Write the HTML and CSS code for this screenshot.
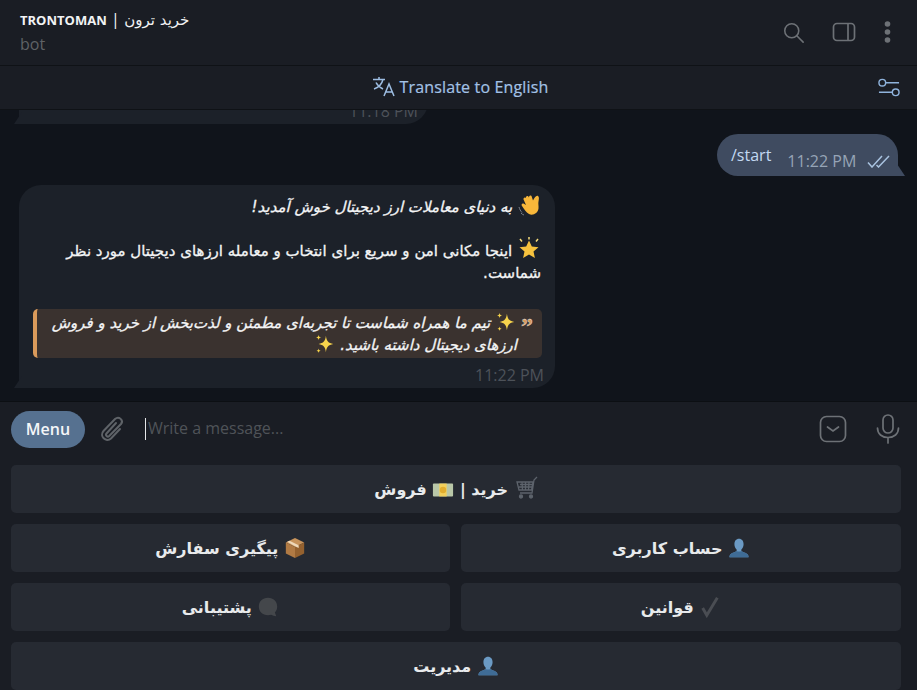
FILE: index.html
```html
<!DOCTYPE html>
<html lang="en">
<head>
  <meta charset="UTF-8">
  <meta name="viewport" content="width=device-width, initial-scale=1.0">
  <title>TRONTOMAN bot</title>
  <link rel="stylesheet" href="styles.css">
</head>
<body>
  <svg class="defs" width="0" height="0">
    <symbol id="person" viewBox="0 0 24 24">
      <path fill="#6b9ac4" d="M12 2c3.2 0 5 2.6 5 5.8 0 2.4-1 4.6-2.4 5.7v1.7c0 .8 5.400 2 6.900 3.800.9 1.100.9 3 .9 3H1.600s0-1.900.9-3c1.500-1.800 6.900-3 6.900-3.800v-1.700C8 12.400 7 10.200 7 7.800 7 4.600 8.800 2 12 2z"/>
      <path fill="#3f6c96" d="M1.600 22s0-1.900.9-3c1.500-1.800 6.900-3 6.900-3.800 1.500 1 3.700 1 5.200 0 0 .8 5.400 2 6.900 3.800.9 1.100.9 3 .9 3z"/>
    </symbol>
    <symbol id="sparkle" viewBox="0 0 24 24">
      <path fill="#f7d44c" d="M13 3c.8 6 2.500 8 8 9-5.500 1-7.200 3-8 9-.8-6-2.500-8-8-9 5.500-1 7.200-3 8-9z"/>
      <path fill="#f7d44c" d="M5 2c.3 2 .9 2.700 3 3-2.100.3-2.700 1-3 3-.3-2-.9-2.700-3-3 2.100-.3 2.700-1 3-3zM5 17c.3 1.600.7 2.100 2.400 2.400-1.700.3-2.100.8-2.400 2.400-.3-1.600-.7-2.100-2.400-2.400 1.700-.3 2.100-.8 2.400-2.400z"/>
    </symbol>
  </svg>

  <div class="app">
    <header class="topbar">
      <div class="peer">
        <div class="peer-name"><b>TRONTOMAN</b> <span class="peer-sep">|</span> <span class="peer-fa" dir="rtl">خرید ترون</span></div>
        <div class="peer-status">bot</div>
      </div>
      <div class="top-icons">
        <svg width="21" height="21" viewBox="0 0 24 24" fill="none" stroke="#6d7176" stroke-width="1.800"><circle cx="10" cy="10" r="8"/><path d="M15.500 15.500l7.500 7.500" stroke-linecap="round"/></svg>
        <svg width="24" height="22" viewBox="0 0 24 22" fill="none" stroke="#6d7176" stroke-width="1.700"><rect x="1.500" y="2.500" width="21" height="17" rx="3.500"/><path d="M16 2.500v17"/></svg>
        <svg width="7" height="22" viewBox="0 0 7 22" fill="#6d7176"><circle cx="3.500" cy="3" r="2.800"/><circle cx="3.500" cy="11" r="2.800"/><circle cx="3.500" cy="19" r="2.800"/></svg>
      </div>
    </header>

    <div class="translate-bar">
      <div class="translate-link">
        <svg width="23" height="21" viewBox="0 0 23 21" fill="none" stroke="#9dbde2" stroke-width="1.500"><path d="M0 3.500h12M6 1v2.500M10 3.500c-1 4-4.500 8-9 9.500M3 6.500c1.500 3 4 5 7 6.500"/><path d="M11 20l5-12 5 12M12.800 16h6.500"/></svg>
        <span>Translate to English</span>
      </div>
      <svg class="tune" width="22" height="20" viewBox="0 0 23 20" fill="none" stroke="#8fb3dc" stroke-width="1.500"><circle cx="4.500" cy="4.500" r="3.500"/><path d="M8 4.500h14M1 14.500h14"/><circle cx="18.500" cy="14.500" r="3.500"/></svg>
    </div>

    <main class="messages">
      <div class="bubble old-bubble">
        <span class="time">11:18 PM</span>
      </div>

      <div class="bubble out-bubble">
        <span class="out-text">/start</span>
        <span class="time">11:22 PM</span>
        <svg width="23" height="13" viewBox="0 0 23 13" fill="none" stroke="#a9c3e0" stroke-width="1.500"><path d="M1 7.500l4 4.500L15 1M9.500 10l2 2L22 1"/></svg>
      </div>

      <div class="bubble in-bubble">
        <div class="msg-text" dir="rtl">
          <p class="slanted"><svg class="emoji" width="24" height="24" viewBox="0 0 24 24"><path fill="#f8b73a" d="M21 3c-2-1-3.500 2-5 4.500L14.500 3C13 2 12 3 12 4.500L11 3C9.500 2.500 8.500 4 9 5L8 4.500C6.500 4.500 6 6 7 7.500L9 12 6.500 10.500C5 10 4 11.500 5 13c2 3 4 6.500 7 8 4 2 9-1 9.500-5.500.3-3-.5-5 0-7 .3-2 1-4.500-.5-5.500z"/><path fill="none" stroke="#7a7f8a" stroke-width="1" d="M2 14c.5 2 1.500 4 3 5.500M4 20c.8 1 1.800 1.700 3 2"/></svg> به دنیای معاملات ارز دیجیتال خوش آمدید!</p>
          <p class="gap-line"><svg class="emoji" width="24" height="24" viewBox="0 0 24 24"><path fill="#f6c23e" d="M12 3.500l2.800 5.900 6.700.8-5 4.400 1.400 6.400L12 17.600l-5.900 3.400 1.400-6.400-5-4.400 6.700-.8z"/><path stroke="#f6dc7a" stroke-width="1.500" d="M12 0v2.500M3 2l2 2.500M21 2l-2 2.500"/></svg> اینجا مکانی امن و سریع برای انتخاب و معامله ارزهای دیجیتال مورد نظر<br>شماست.</p>
        </div>
        <blockquote class="quote" dir="rtl">
          <span class="quote-mark">”</span>
          <p class="slanted"><svg class="emoji" width="22" height="22"><use href="#sparkle"/></svg> تیم ما همراه شماست تا تجربه‌ای مطمئن و لذت‌بخش از خرید و فروش<br>ارزهای دیجیتال داشته باشید. <svg class="emoji" width="22" height="22"><use href="#sparkle"/></svg></p>
        </blockquote>
        <div class="in-time"><span class="time">11:22 PM</span></div>
      </div>
    </main>

    <div class="composer">
      <button class="menu-btn">Menu</button>
      <svg class="clip" width="26" height="28" viewBox="0 0 26 28" fill="none" stroke="#5f6368" stroke-width="2" stroke-linecap="round"><path d="M17 8L7.500 18.500c-1.500 1.800.9 4.100 2.700 2.500L22 9c3-3.500-2-8.500-6-5L4.500 16c-4.500 5 2.500 12 7.500 7.500L21 14"/></svg>
      <div class="input"><span class="caret"></span><span class="placeholder">Write a message...</span></div>
      <svg width="28" height="28" viewBox="0 0 28 28" fill="none" stroke="#6d7176" stroke-width="1.700"><rect x="1.500" y="1.500" width="25" height="25" rx="6"/><path d="M8.500 12l5.500 4 5.500-4" stroke-linecap="round"/></svg>
      <svg class="mic" width="24" height="30" viewBox="0 0 24 30" fill="none" stroke="#6d7176" stroke-width="1.700"><rect x="7" y="1" width="10" height="18" rx="5"/><path d="M1.500 14c0 6 4.500 9.500 10.500 9.500S22.500 20 22.500 14M12 23.500V29" stroke-linecap="round"/></svg>
    </div>

    <div class="keyboard">
      <button class="key wide" dir="rtl"><svg class="emoji" width="24" height="24" viewBox="0 0 24 24" fill="none" stroke="#5d636c" stroke-width="1.300"><path d="M23 1l-3 3-2 13H6M3 6h16l-1.500 8H5z"/><path d="M6 8.500h12M5 11h13M8 6l.5 8M11.500 6v8M15 6l-.5 8"/><circle cx="7" cy="20.500" r="1.500" fill="#5d636c"/><circle cx="17" cy="20.500" r="1.500" fill="#5d636c"/></svg> خرید | <svg class="emoji" width="22" height="20" viewBox="0 0 24 20"><rect x="1" y="3" width="22" height="14" rx="1" fill="#b9c7a8"/><rect x="8" y="3" width="8" height="14" fill="#f2cf5b"/><circle cx="12" cy="10" r="3.500" fill="#e2ad2e"/></svg> فروش</button>
      <button class="key" dir="rtl"><svg class="emoji" width="22" height="22" viewBox="0 0 24 24"><path fill="#c8945c" d="M12 1l10 5-10 5L2 6z"/><path fill="#b07a44" d="M2 6l10 5v12L2 18z"/><path fill="#94612f" d="M22 6l-10 5v12l10-5z"/><path fill="#efd9ba" d="M6 4l10 5v3l-3-1.500L3.500 5.300z"/></svg> پیگیری سفارش</button>
      <button class="key" dir="rtl"><svg class="emoji" width="22" height="22"><use href="#person"/></svg> حساب کاربری</button>
      <button class="key" dir="rtl"><svg class="emoji" width="22" height="22" viewBox="0 0 24 24"><path fill="#44474b" d="M12 2c6 0 10 4 10 9.500 0 3-1 5-2.500 6.500l1.500 4c-2 0-4-.5-5.500-1.500-1 .3-2.300.5-3.500.5-6 0-10-4-10-9.500S6 2 12 2z"/></svg> پشتیبانی</button>
      <button class="key" dir="rtl"><svg class="emoji" width="22" height="22" viewBox="0 0 24 24" fill="none" stroke="#4a4d53" stroke-width="3.200"><path d="M4 13l4.500 8L20 2"/></svg> قوانین</button>
      <button class="key wide" dir="rtl"><svg class="emoji" width="22" height="22"><use href="#person"/></svg> مدیریت</button>
    </div>
  </div>
</body>
</html>
```

FILE: styles.css
```css
* {
  margin: 0;
  padding: 0;
  box-sizing: border-box;
}
html, body {
  height: 100%;
  overflow: hidden;
}
body {
  font-family: "Open Sans", "DejaVu Sans", sans-serif;
  background-color: #1a1d24;
  color: #fff;
}
.defs {
  display: block;
  height: 0;
}
.app {
  height: 690px;
  display: flex;
  flex-direction: column;
}
.topbar {
  height: 66px;
  flex: none;
  display: flex;
  justify-content: space-between;
  align-items: flex-start;
  padding: 8px 26px 0 20px;
  background: #1a1d24;
  border-bottom: 1px solid #0f1216;
}
.peer-name {
  font-size: 13px;
  line-height: 22px;
  color: #f2f3f4;
}
.peer-sep {
  font-size: 16px;
  margin: 0 1px;
}
.peer-fa {
  font-family: "DejaVu Sans", sans-serif;
  font-size: 15px;
}
.peer-status {
  font-size: 16px;
  line-height: 26px;
  color: #5f6266;
}
.top-icons {
  display: flex;
  align-items: center;
  gap: 28px;
  padding-top: 13px;
}
.translate-bar {
  height: 44px;
  flex: none;
  display: flex;
  align-items: center;
  justify-content: center;
  background: #1a1d24;
  border-bottom: 1px solid #0f1216;
  position: relative;
}
.translate-link {
  display: flex;
  align-items: center;
  gap: 4px;
  font-size: 16px;
  letter-spacing: 0.15px;
  color: #a3c2e6;
  -webkit-text-stroke: 0.2px #a3c2e6;
  margin: -2px 0 0 4px;
}
.tune {
  position: absolute;
  right: 17px;
  top: 12px;
}
.messages {
  flex: 1;
  min-height: 0;
  overflow: hidden;
  display: flex;
  flex-direction: column;
  justify-content: flex-end;
  background: #10141b;
  padding: 0 19px 13px;
  border-bottom: 1px solid #0c0f13;
}
.bubble {
  position: relative;
  background: #1c2129;
  border-radius: 22px;
  flex: none;
}
.bubble::after {
  content: "";
  position: absolute;
  bottom: 0;
  width: 8px;
  height: 12px;
  background: inherit;
}
.old-bubble {
  width: 409px;
  height: 50px;
  margin-bottom: 10px;
  text-align: right;
  padding: 26px 10px 0 0;
  border-bottom-left-radius: 0;
}
.old-bubble::after,
.in-bubble::after {
  left: -5px;
  clip-path: polygon(0 100%, 100% 0, 100% 100%);
}
.out-bubble {
  align-self: flex-end;
  width: 181px;
  height: 42px;
  margin-bottom: 9px;
  background: #3f4b60;
  border-bottom-right-radius: 0;
  display: flex;
  align-items: flex-end;
  padding: 0 7px 5px 14px;
}
.out-bubble::after {
  right: -7px;
  clip-path: polygon(0 0, 100% 100%, 0 100%);
}
.out-text {
  font-size: 16px;
  line-height: 22px;
  color: #c3d9f2;
  margin-bottom: 5px;
  margin-right: 16px;
}
.out-bubble .time {
  color: #96a4b6;
  margin-right: 11px;
}
.out-bubble svg {
  margin-bottom: 3px;
}
.time {
  font-size: 16px;
  line-height: 20px;
  color: #4d5259;
  white-space: nowrap;
}
.in-bubble {
  width: 536px;
  height: 203px;
  padding: 11px 11px 0 14px;
  border-bottom-left-radius: 0;
  display: flex;
  flex-direction: column;
}
.msg-text,
.quote {
  font-family: "DejaVu Sans", sans-serif;
  font-size: 15px;
  line-height: 22px;
  color: #f3f4f5;
  -webkit-text-stroke: 0.3px #f3f4f5;
}
.msg-text {
  padding-right: 3px;
}
.slanted {
  font-style: italic;
}
.gap-line {
  margin-top: 22px;
}
.emoji {
  vertical-align: -1px;
  margin-block: -4px;
}
.quote {
  margin-top: 25px;
  width: 509px;
  height: 49px;
  flex: none;
  background: #3a322f;
  border-left: 4px solid #d99a5b;
  border-radius: 5px;
  padding: 3px 9px 0 0;
  display: flex;
  gap: 4px;
}
.quote-mark {
  font-family: "Liberation Serif", serif;
  font-weight: bold;
  font-size: 24px;
  line-height: 28px;
  color: #d99a5b;
}
.in-time {
  text-align: right;
  margin-top: 6px;
}
.composer {
  height: 63px;
  flex: none;
  display: flex;
  align-items: center;
  padding: 0 17px 9px 11px;
  background: #1a1d24;
}
.menu-btn {
  width: 74px;
  height: 37px;
  border: none;
  border-radius: 19px;
  background: #567190;
  color: #f4f6f8;
  font-family: "Open Sans", sans-serif;
  font-weight: 600;
  font-size: 16px;
}
.clip {
  margin-left: 14px;
}
.input {
  flex: 1;
  display: flex;
  align-items: center;
  margin-left: 20px;
  font-size: 16px;
  color: #4f5358;
}
.caret {
  width: 1px;
  height: 22px;
  margin-right: 2px;
  background: #e4e6e8;
}
.placeholder {
  margin-top: -2px;
}
.mic {
  margin-left: 29px;
}
.keyboard {
  flex: none;
  height: 225px;
  padding: 0 16px 0 11px;
  display: grid;
  grid-template-columns: 439px 440px;
  grid-auto-rows: 48px;
  gap: 11px;
}
.key {
  border: none;
  border-radius: 5px;
  background: #262a32;
  color: #e8eaec;
  font-family: "DejaVu Sans", sans-serif;
  font-size: 16px;
  font-weight: 700;
}
.key.wide {
  grid-column: 1 / -1;
}
```
